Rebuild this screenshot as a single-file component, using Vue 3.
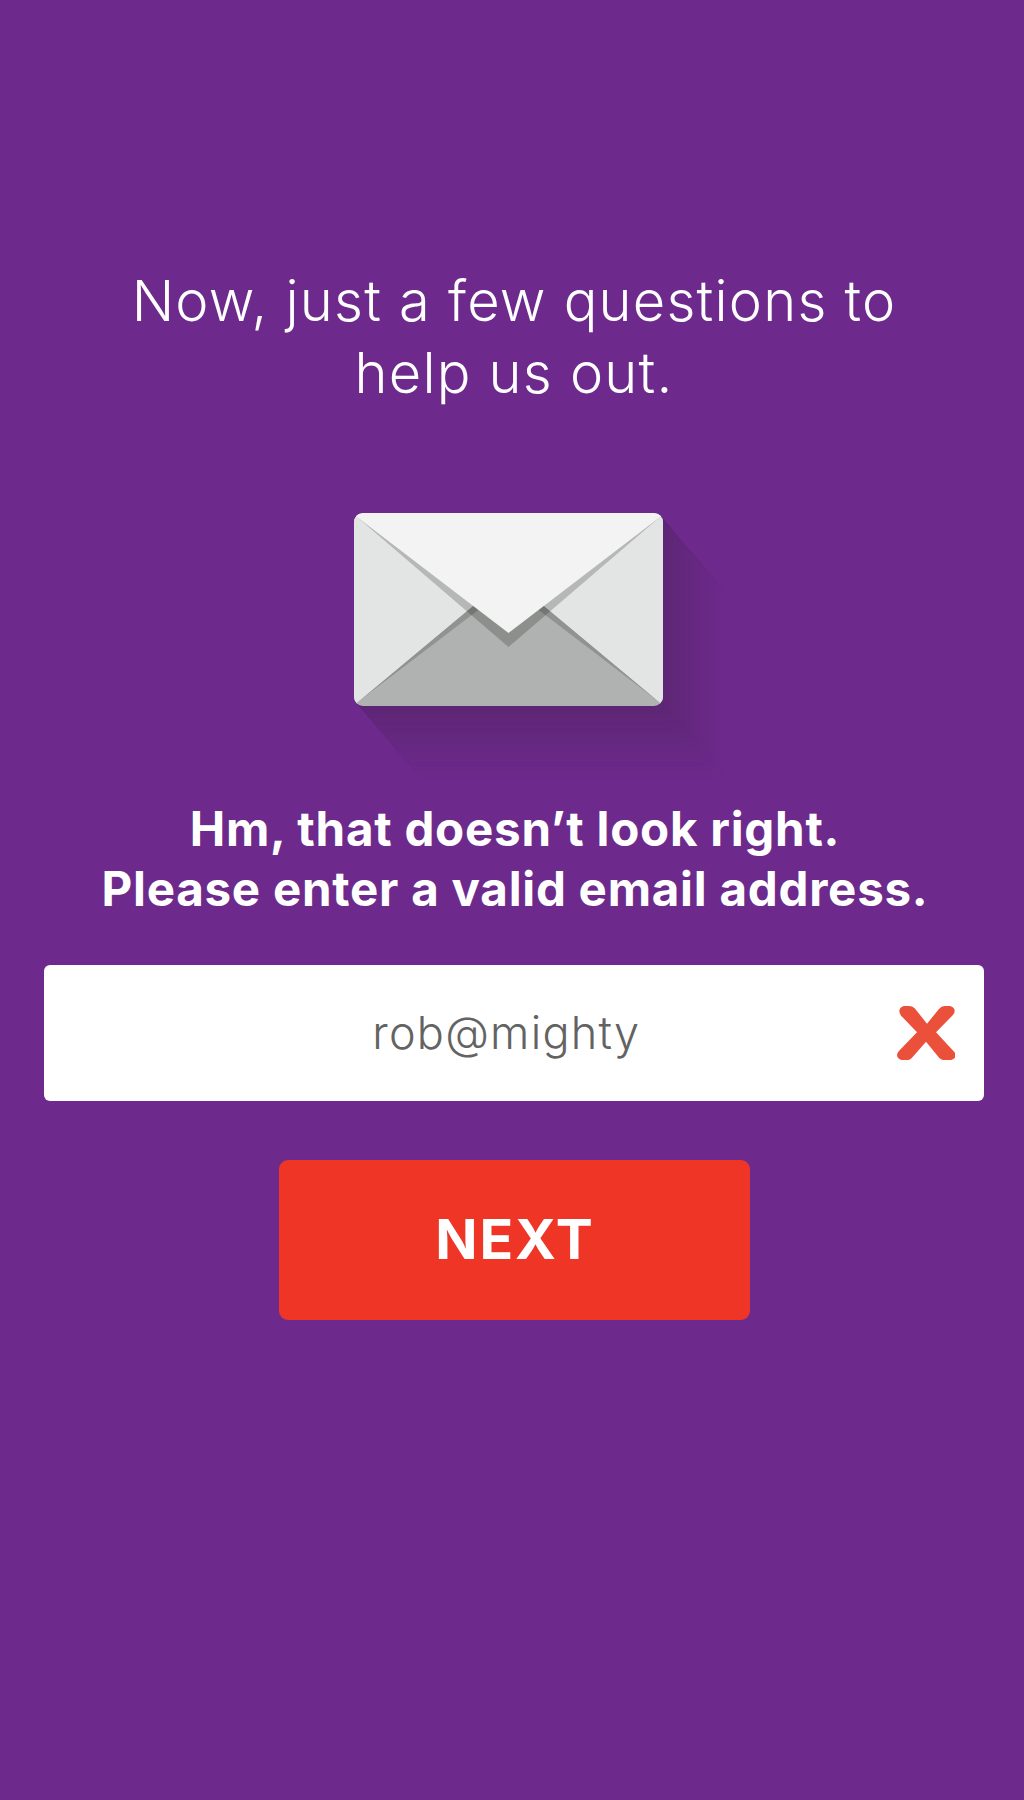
<script setup>
import { ref } from 'vue'

const email = ref('rob@mighty')

// Long shadow: copies of the envelope outline, farthest (lightest) first
const STEPS = 63
const near = [94, 38, 118]
const far = [109, 42, 140]
const shadow = Array.from({ length: STEPS }, (_, i) => {
  const k = STEPS - i
  const t = k / STEPS
  const rgb = near.map((c, j) => Math.round(c + (far[j] - c) * t))
  return { x: k, y: +(k * 1.17).toFixed(2), fill: `rgb(${rgb.join(',')})` }
})
</script>

<template>
  <main class="screen">
    <h1 class="heading">Now, just a few questions to<br />help us out.</h1>

    <svg class="envelope" viewBox="0 0 309 193" width="309" height="193" aria-hidden="true">
      <defs>
        <clipPath id="envelope-body">
          <rect width="309" height="193" rx="9" />
        </clipPath>
      </defs>
      <rect
        v-for="s in shadow"
        :key="s.x"
        :x="s.x"
        :y="s.y"
        width="309"
        height="193"
        rx="9"
        :fill="s.fill"
      />
      <g clip-path="url(#envelope-body)">
        <rect width="309" height="193" fill="#afb2b0" />
        <path d="M3 189.5 154.5 73.9 306 189.5V60H3Z" fill="#929292" />
        <path d="M0 0H3L154.5 63.2 3 189.5 0 192Z" fill="#e2e5e4" />
        <path d="M3 189.5 154.5 63.2V30L3 4Z" fill="#e2e5e4" />
        <path d="M309 0H306L154.5 63.2 306 189.5 309 192Z" fill="#e2e5e4" />
        <path d="M306 189.5 154.5 63.2V30L306 4Z" fill="#e2e5e4" />
        <path d="M3 4 154.5 134 306 4Z" fill="#060600" fill-opacity="0.2" />
        <path d="M0 0H309V1.7L306 4 154.5 120 3 4 0 1.7Z" fill="#f3f3f3" />
      </g>
    </svg>

    <p class="error">Hm, that doesn’t look right.<br />Please enter a valid email address.</p>

    <div class="field">
      <span class="value">{{ email }}</span>
      <svg class="invalid" viewBox="0 0 176 163" width="58.7" height="54.3" aria-hidden="true">
        <path
          d="M24 0H36Q46 0 53 7L90 53 126 9Q133 0 143 0H154C168 0 173 8 173 16Q173 22 167 28L117 79 170 136Q176 142 176 148C176 156 168 163 154 163H146Q134 163 127 156L87 107 47 153Q39 163 28 163H22C8 163 0 156 0 148Q0 142 5 136L60 79 12 29Q7 23 7 16C7 8 13 0 24 0Z"
          fill="#ea503a"
        />
      </svg>
    </div>

    <button class="next" type="button">NEXT</button>
  </main>
</template>

<style>
body {
  margin: 0;
  background: #6d2a8c;
}
</style>

<style scoped>
.screen {
  box-sizing: border-box;
  min-height: 1800px;
  padding: 265px 40px 0 44px;
  display: flex;
  flex-direction: column;
  align-items: center;
  background: #6d2a8c;
  color: #fff;
  font-family: Inter, "Liberation Sans", sans-serif;
  text-align: center;
}

.heading {
  margin: 0;
  font-size: 56px;
  font-weight: 300;
  line-height: 72px;
  letter-spacing: 1.22px;
  white-space: nowrap;
}

.envelope {
  display: block;
  margin: 104px 11px 0 0;
  overflow: visible;
}

.error {
  margin: 93px 0 0 2px;
  font-size: 47.5px;
  font-weight: 700;
  line-height: 60px;
  letter-spacing: 0.76px;
  white-space: nowrap;
}

.field {
  box-sizing: border-box;
  width: 100%;
  height: 136px;
  margin-top: 46px;
  padding-right: 28.7px;
  display: flex;
  align-items: center;
  border-radius: 6px;
  background: #fff;
}

.value {
  flex: 1;
  padding: 0 0 1px 72px;
  color: #636363;
  font-size: 45px;
  font-weight: 300;
  letter-spacing: 1.25px;
}

.invalid {
  display: block;
  flex: none;
}

.next {
  width: 471px;
  height: 160px;
  margin: 59px 0 0 1px;
  padding: 0 0 4px 1px;
  border: 0;
  border-radius: 9px;
  background: #ef3526;
  color: #fff;
  font: inherit;
  font-size: 55.5px;
  font-weight: 700;
  letter-spacing: 1.9px;
}
</style>
